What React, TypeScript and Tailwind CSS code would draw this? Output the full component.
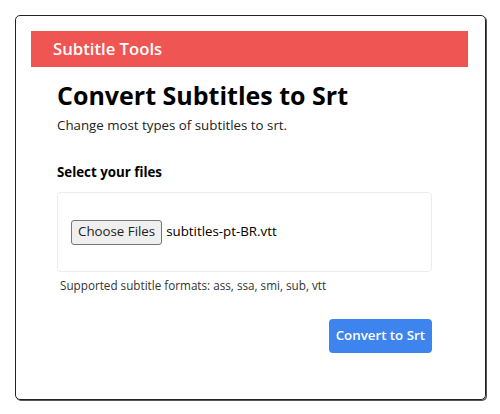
import React from 'react';

const App = () => {
  return (
    <div className="w-[500px] h-[414px] bg-white pt-[15px] pl-[15px]" style={{ fontFamily: '"Open Sans", sans-serif' }}>
      <div className="w-[471px] h-[385px] border border-[#222] rounded-[5px] shadow-[1px_1px_0_#555] pt-[15px] pl-[15px]">
        {/* Header bar */}
        <div className="w-[437px] h-[36px] bg-[#ef5552] flex items-center pl-[22px]">
          <span className="text-white font-semibold text-[16.7px] leading-none">Subtitle Tools</span>
        </div>

        <div className="pl-[26px] w-[425px]">
          <h1 className="mt-[11px] text-[25px] font-bold text-black leading-[34px]">Convert Subtitles to Srt</h1>
          <p className="mt-[4px] text-[13.3px] text-[#222] leading-[18px]">Change most types of subtitles to srt.</p>

          <h2 className="mt-[29px] text-[13.3px] font-bold text-black leading-[18px]">Select your files</h2>

          <div className="mt-[11px] w-[375px] h-[80px] border border-[#ececec] rounded-[4px] flex items-center pl-[13px]">
            <button className="h-[25px] px-[6px] bg-[#efefef] border border-[#767676] rounded-[3px] text-[13.3px] text-[#222] leading-none">
              Choose Files
            </button>
            <span className="ml-[4px] text-[13.3px] text-black">subtitles-pt-BR.vtt</span>
          </div>

          <p className="mt-[5px] pl-[3px] text-[11.7px] text-[#333] leading-[17px]">Supported subtitle formats: ass, ssa, smi, sub, vtt</p>

          <div className="flex justify-end w-[375px] mt-[25px]">
            <button className="h-[34px] px-[7px] bg-[#3d84ee] text-white text-[13.3px] font-semibold rounded-[4px]">
              Convert to Srt
            </button>
          </div>
        </div>
      </div>
    </div>
  );
};

export default App;
